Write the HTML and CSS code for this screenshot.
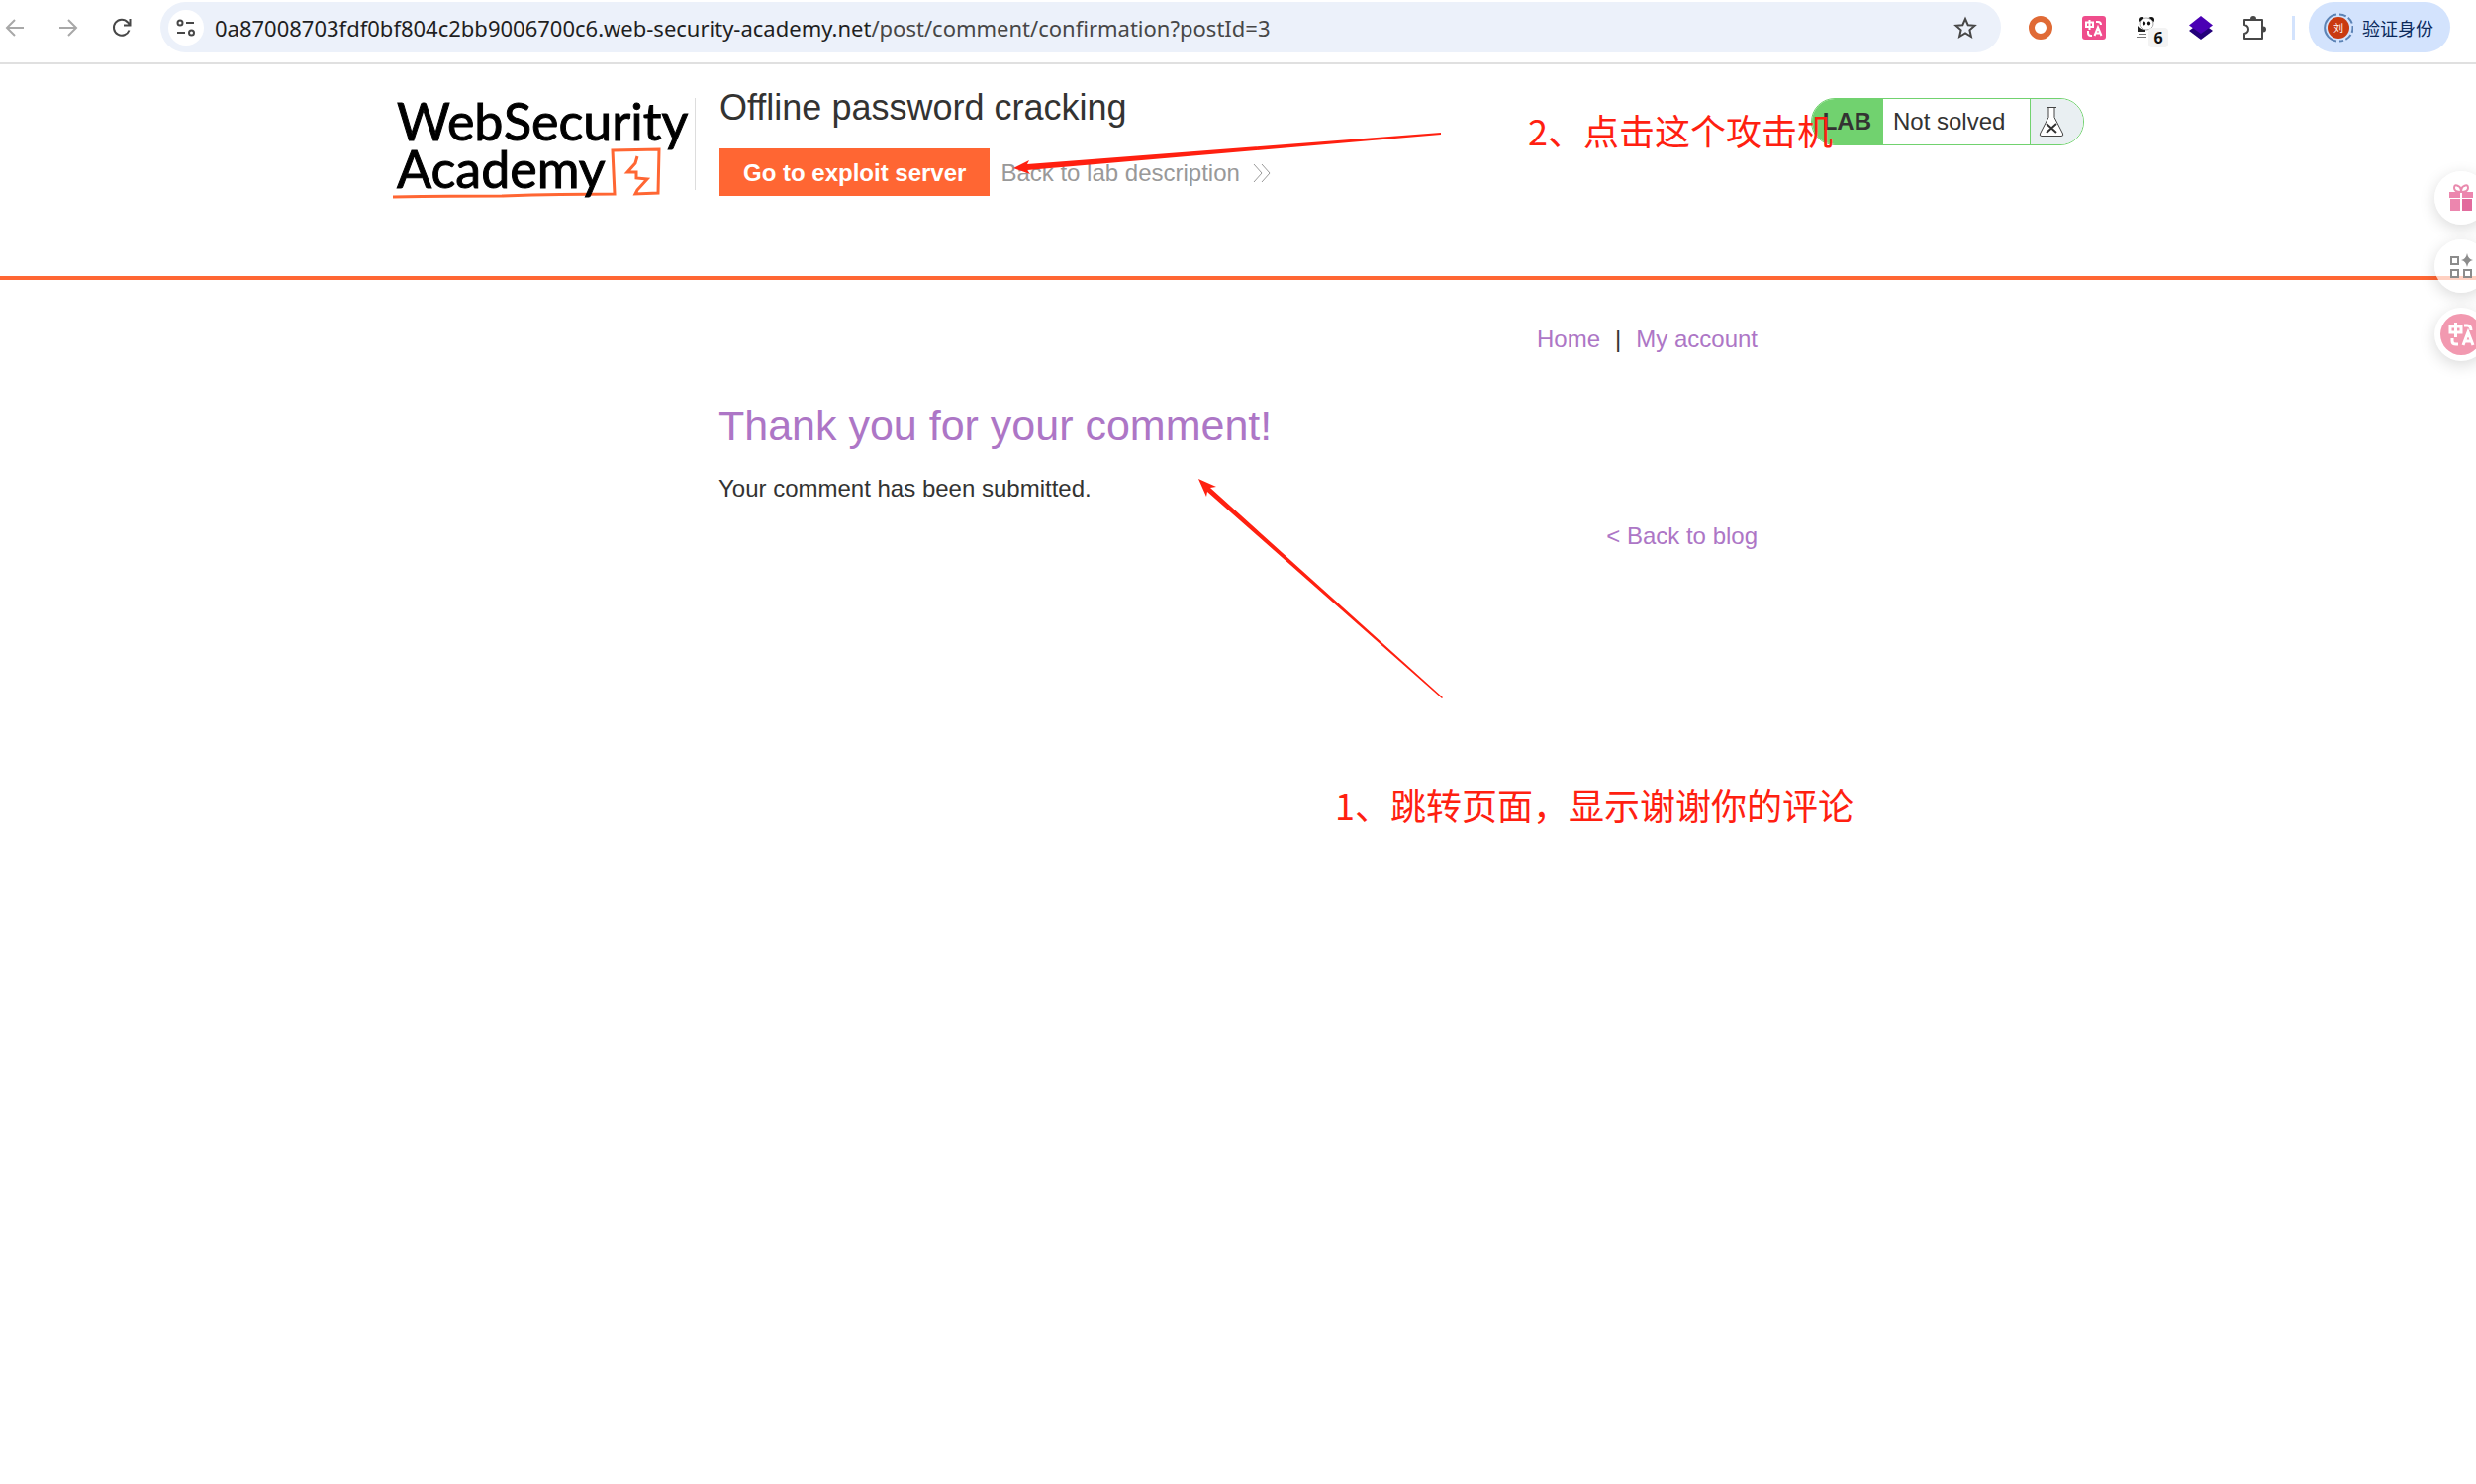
FILE: index.html
```html
<!DOCTYPE html>
<html lang="en">
<head>
<meta charset="utf-8">
<title>Offline password cracking</title>
<link rel="stylesheet" href="styles.css">
</head>
<body>
<div class="browser-bar">
  <div class="nav-buttons">
    <button class="icon-button" aria-label="Back"><svg class="dim" width="20" height="20" viewBox="0 0 20 20"><path d="M19 10H2M10 2L2 10l8 8"/></svg></button>
    <button class="icon-button" aria-label="Forward"><svg class="dim" width="20" height="20" viewBox="0 0 20 20"><path d="M1 10h17M10 2l8 8-8 8"/></svg></button>
    <button class="icon-button" aria-label="Reload"><svg class="dark" width="20" height="20" viewBox="0 0 20 20"><path d="M17.500 12.500A8 8 0 1 1 16 4.500L18 7M18.500 1v6.500H12"/></svg></button>
  </div>
  <div class="omnibox">
    <button class="site-info" aria-label="Site information"><svg class="dark" width="20" height="20" viewBox="0 0 20 20"><circle cx="4" cy="5" r="2.500"/><path d="M10 5h8M1 15h8"/><circle cx="15.500" cy="15" r="2.500"/></svg></button>
    <div class="url">0a87008703fdf0bf804c2bb9006700c6.web-security-academy.net<span class="url-path">/post/comment/confirmation?postId=3</span></div>
    <button class="icon-button" aria-label="Bookmark"><svg class="dark" width="24" height="24" viewBox="0 0 24 24"><path d="M12 3l2.700 6.200 6.800.6-5.100 4.500 1.500 6.700-5.900-3.500L6.100 21l1.500-6.700-5.100-4.500 6.800-.6z"/></svg></button>
  </div>
  <div class="extensions">
    <button class="icon-button" aria-label="Recorder"><svg width="24" height="24" viewBox="0 0 24 24"><circle cx="12" cy="12" r="9" fill="none" stroke="#e06a35" stroke-width="6"/></svg></button>
    <button class="icon-button" aria-label="Translate"><svg width="24" height="24" viewBox="0 0 24 24"><rect width="24" height="24" rx="3" fill="#ef4d8c"/><g fill="none" stroke="#fff" stroke-width="2"><path d="M4 6.500h7v4.500H4zM7.500 4v10M14 6h2q3 0 3 3M6 15v2q0 3 3 3h1M12.500 20l3.500-8.500 3.500 8.500M13.500 17.500h5"/></g></svg></button>
    <button class="icon-button panda" aria-label="Panda, 6 items"><svg width="24" height="24" viewBox="0 0 24 24"><circle cx="6" cy="4" r="3" fill="#111"/><circle cx="16" cy="4" r="3" fill="#111"/><ellipse cx="11" cy="8" rx="7" ry="6" fill="#fff" stroke="#aaa"/><ellipse cx="8.500" cy="7.500" rx="1.600" ry="2" fill="#111"/><ellipse cx="13.500" cy="7.500" rx="1.600" ry="2" fill="#111"/><path d="M2 10q3 4 8 4v2H2z" fill="#222"/><path d="M3 18.500h8M1 21.500h10" fill="none" stroke="#777"/></svg><span class="badge">6</span></button>
    <button class="icon-button" aria-label="Layers"><svg width="24" height="24" viewBox="0 0 24 24"><path d="M0 15l4-3h16l4 3-12 9z" fill="#23007a"/><path d="M12 0l12 9.500L12 18 0 9.500z" fill="#4a00b4"/></svg></button>
    <button class="icon-button" aria-label="Extensions"><svg class="dark" width="24" height="26" viewBox="0 0 24 26"><path d="M2 5h18v19H2v-5q4-1 4-4.500T2 10z" stroke-linejoin="round"/><path d="M8 4a3 3 0 0 1 6 0zM21 11.500a3 3 0 0 1 0 6z" fill="#474747" stroke="none"/></svg></button>
  </div>
  <span class="divider"></span>
  <button class="profile"><svg width="30" height="30" viewBox="0 0 30 30"><path d="M13 28.400A13.500 13.500 0 0 1 13 1.600" fill="none" stroke="#5c83b5" stroke-width="2"/><path d="M16 1.500A13.500 13.500 0 0 1 16 28.500" fill="none" stroke="#5c83b5" stroke-width="2" stroke-dasharray="7 2.500"/><circle cx="15" cy="15" r="11" fill="#c93a10"/><text x="15" y="19" text-anchor="middle" class="avatar-text">刘</text></svg>验证身份</button>
</div>

<header class="lab-header">
  <div class="lab-inner">
    <a class="logo" href="#" aria-label="Web Security Academy"><svg width="306" height="93" viewBox="0 0 306 93">
      <path d="M1 100q60-1 110-1 60-2 114-2l-2-44 47-1-1 44-23 1 2-4 10-11-11-1v-6h-9l8-9 2-7" fill="none" stroke="#ff6633" stroke-width="3"/>
      <g class="logo-text"><text x="5" y="43">Web</text><text x="113" y="43">Security</text><text x="5" y="91">Academy</text></g>
    </svg></a>
    <div class="lab-title">
      <h1>Offline password cracking</h1>
      <div class="lab-links">
        <a class="exploit-button" href="#">Go to exploit server</a>
        <a class="back-link" href="#">Back to lab description <svg width="18" height="20" viewBox="0 0 18 20"><path d="M1 1l8 9-8 9M9 1l8 9-8 9"/></svg></a>
      </div>
    </div>
    <div class="lab-status">
      <span class="lab-tag">LAB</span>
      <span class="lab-state">Not solved</span>
      <span class="lab-flask"><svg width="26" height="32" viewBox="0 0 26 32"><path d="M8 1.500h10M10 1.500v10L1.500 28q-1 2.500 1.500 2.500h20q2.500 0 1.500-2.500L16 11.500v-10" fill="#fff" stroke="#444"/><path d="M8 18l10 9M18 18L8 27" stroke="#333" stroke-width="2"/></svg></span>
    </div>
  </div>
</header>

<main class="page">
  <nav class="top-links"><a href="#">Home</a><span>|</span><a href="#">My account</a></nav>
  <h2>Thank you for your comment!</h2>
  <p>Your comment has been submitted.</p>
  <div class="back-row"><a href="#">&lt; Back to blog</a></div>
</main>

<aside class="side-tools">
  <button aria-label="Rewards"><svg width="24" height="28" viewBox="0 0 24 28"><path d="M12 8Q5 8 5 4t4-2q3 1 3 6 0-5 3-6 4-2 4 2t-7 4" fill="none" stroke="#e98aae" stroke-width="2"/><path d="M0 8h11v6H0zM13 8h11v6H13zM1 15h10v12H1z" fill="#ec86ae"/><path d="M13 15h10v12H13z" fill="#e26b9d"/></svg></button>
  <button aria-label="Apps"><svg width="24" height="26" viewBox="0 0 24 26"><g fill="none" stroke="#8c8c8c" stroke-width="2"><path d="M2 4h7v7H2zM2 17h7v7H2zM15 17h7v7h-7z"/></g><path d="M18 0q1 6 6 7-5 1-6 7-1-6-6-7 5-1 6-7z" fill="#8c8c8c"/></svg></button>
  <button class="translate" aria-label="Translate page"><svg width="42" height="42" viewBox="0 0 42 42"><circle cx="21" cy="21" r="21" fill="#f299b0"/><g fill="none" stroke="#fff" stroke-width="3"><path d="M10 13h11v6H10zM15.500 9v15M24 12h3q4 0 4 5M12 25v3q0 3 4 3h2M23 32l5-13 5 13M24 28h8"/></g></svg></button>
</aside>

<div class="notes">
  <span class="note note-server">2、点击这个攻击机</span>
  <span class="note note-page">1、跳转页面，显示谢谢你的评论</span>
  <svg class="arrows" width="440" height="580" viewBox="0 0 440 580"><path d="M1 40L17 32l-2 4L433 4v2L15 42l3 4zM188 354l18 8-6 1 235 212-1 1-237-209-1 5z"/></svg>
</div>
</body>
</html>
```
FILE: styles.css
```css
* { box-sizing: border-box; }
body {
  margin: 0;
  min-height: 100vh;
  background: #fff;
  color: #333332;
  font: 24px/28px "Liberation Sans", Arial, sans-serif;
  overflow-x: hidden;
  position: relative;
}
button { border: 0; padding: 0; background: none; font: inherit; color: inherit; }
a { color: #ad76c6; text-decoration: none; }
h1, h2, p { margin: 0; font-weight: 400; }
svg { display: block; flex: none; }

/* browser toolbar */
.browser-bar {
  display: flex;
  align-items: center;
  height: 65px;
  padding: 3px 26px 11px 5px;
  border-bottom: 2px solid #e0e0e0;
}
.icon-button { display: flex; align-items: center; justify-content: center; }
.dim, .dark { fill: none; stroke: #474747; stroke-width: 2; }
.dim { stroke: #a8a8a8; }
.nav-buttons { display: flex; gap: 34px; margin-right: 29px; }
.omnibox {
  flex: 1;
  display: flex;
  align-items: center;
  height: 51px;
  padding: 0 24px 0 8px;
  border-radius: 26px;
  background: #ecf1fa;
}
.site-info {
  display: flex;
  align-items: center;
  justify-content: center;
  width: 36px;
  height: 36px;
  border-radius: 50%;
  background: #fff;
}
.url {
  flex: 1;
  margin-left: 11px;
  font: 22px/30px "Noto Sans", "Open Sans", sans-serif;
  color: #1f1f1f;
}
.url-path { color: #474747; }
.extensions { display: flex; align-items: center; gap: 30px; margin-left: 28px; }
.panda { position: relative; }
.badge {
  position: absolute;
  left: 13px;
  top: 12px;
  width: 20px;
  height: 20px;
  border-radius: 4px;
  background: #f3f3f3;
  color: #111;
  font: bold 16px/20px "Open Sans", sans-serif;
}
.divider { width: 3px; height: 24px; margin: 0 14px 0 26px; background: #d3e3fd; }
.profile {
  display: flex;
  align-items: center;
  gap: 9px;
  height: 51px;
  padding: 0 17px 0 15px;
  border-radius: 26px;
  background: #d3e3fd;
  color: #0b2a5c;
  font: 18px/24px "Noto Sans CJK SC", sans-serif;
}
.avatar-text { font-size: 10px; fill: #fff; }

/* lab banner */
.lab-header { padding: 20px 24px 0; height: 218px; border-bottom: 4px solid #ff6633; }
.lab-inner { display: flex; align-items: flex-start; max-width: 1710px; margin: 0 auto; }
.logo { margin: 14px 24px 0 0; height: 93px; width: 307px; border-right: 1px solid #ddd; }
.logo svg { overflow: visible; }
.logo-text { font-family: Lato, sans-serif; font-size: 52px; fill: #000; stroke: #000; stroke-width: 1; }
.lab-title { flex: 1; }
.lab-title h1 { padding-top: 2px; font-size: 36px; line-height: 44px; }
.lab-links { display: flex; align-items: center; gap: 11px; margin-top: 19px; }
.exploit-button { padding: 11px 24px 9px; background: #ff6633; color: #fff; font-weight: 700; }
.back-link { display: flex; align-items: center; gap: 13px; padding-top: 2px; color: #999; }
.back-link svg { fill: none; stroke: #999; }
.lab-status {
  display: flex;
  height: 48px;
  margin-top: 14px;
  border: 1px solid #71d26f;
  border-radius: 24px;
  overflow: hidden;
  line-height: 46px;
}
.lab-tag { width: 72px; padding-right: 12px; background: #71d26f; font-weight: 700; text-align: right; }
.lab-state { width: 148px; padding-left: 10px; }
.lab-flask { width: 54px; padding: 7px 8px; background: #e9eff2; border-left: 1px solid #71d26f; }

/* page content */
.page { max-width: 1050px; margin: 0 auto; padding: 46px 0; }
.top-links { display: flex; justify-content: flex-end; gap: 15px; }
.page h2 { margin-top: 47px; color: #ad76c6; font-size: 43px; line-height: 52px; }
.page p { margin-top: 24px; }
.back-row { margin-top: 20px; text-align: right; }

/* floating tools at the window edge */
.side-tools { position: absolute; right: -12px; top: 173px; display: flex; flex-direction: column; gap: 15px; }
.side-tools button {
  display: flex;
  align-items: center;
  justify-content: center;
  width: 54px;
  height: 54px;
  border-radius: 27px;
  background: rgba(255, 255, 255, 0.7);
  box-shadow: 0 4px 16px rgba(0, 0, 0, 0.15);
}
.side-tools .translate { background: #fff; }

/* hand-made remarks over the page */
.notes { position: absolute; left: 50%; top: 0; color: #ff2010; font: 36px/52px "Noto Sans CJK SC", sans-serif; pointer-events: none; }
.note { position: absolute; white-space: nowrap; }
.note-server { left: 293px; top: 105px; }
.note-page { left: 98px; top: 787px; }
.arrows { position: absolute; left: -228px; top: 130px; fill: #ff2010; }
```
